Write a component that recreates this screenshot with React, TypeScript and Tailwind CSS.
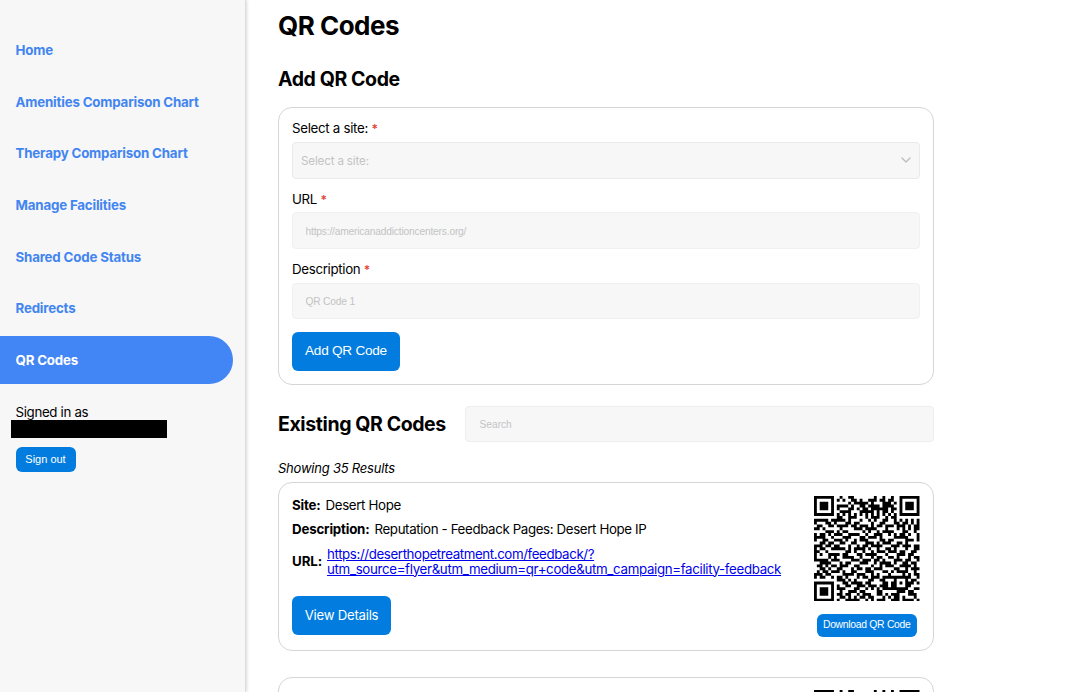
import { ChevronDown } from "lucide-react";

const links = [
  "Home",
  "Amenities Comparison Chart",
  "Therapy Comparison Chart",
  "Manage Facilities",
  "Shared Code Status",
  "Redirects",
];

const qrRows = [
  "1111111001001100000001001001001111111",
  "1000001010100110100111011011001000001",
  "1011101000001011111010001110101011101",
  "1011101011110100110111101111001011101",
  "1011101010001101011011111101101011101",
  "1000001001111000111110101101001000001",
  "1111111010101010101010101010101111111",
  "0000000011001110001011100101100000000",
  "1111101111101000100101001100101010101",
  "1000110100011011000010011000110110101",
  "0110011011110110111010110111011101011",
  "1101000001000011101111000100010101011",
  "0000111010110000010100101111000110010",
  "1011010111001111001001110010101101001",
  "1111001000111000110111010000111110001",
  "1001100111010010111000011011000011101",
  "0011011001100110001110101110011010000",
  "1110110110001001011011110001110111011",
  "1011001111101011110100100110100010011",
  "1100100000011010010010111011101100110",
  "1010011110110001101111000100011101100",
  "1000010100111100100010110011010001011",
  "1111101110000111011101101000111011001",
  "0011110001011000111001011110100110110",
  "0110101101110011000010010111001111010",
  "0011010011000101101101110000110010111",
  "0101101110100110001110001101011110010",
  "1110110000111101110010100010000101011",
  "1011001011010001011011101111111111001",
  "0000000011101010000110011000100010110",
  "1111111000110111101100001101101011101",
  "1000001010011001110111011101100011000",
  "1011101011100011001010101111111110011",
  "1011101001001110110000110000011101100",
  "1011101011011001011100110101110001110",
  "1000001001101010110110001010110100010",
  "1111111010011111001010111001110111101",
];

const qrPath = qrRows
  .flatMap((row, y) => [...row].map((v, x) => (v === "1" ? `M${x} ${y}h1v1h-1z` : "")))
  .join("");

function QrCode() {
  return (
    <svg viewBox="0 0 37 37" className="block size-[105.5px] shrink-0" aria-label="QR code">
      <path d={qrPath} fill="#000" />
    </svg>
  );
}

function Required() {
  return <span className="text-[12px] font-semibold text-[#e0453a]">*</span>;
}

function Field({ label, placeholder }: { label: string; placeholder: string }) {
  return (
    <label className="block h-[70.5px]">
      <span className="block h-[21.5px] text-[13.3px] leading-[16px] tracking-[-0.33px]">
        {label} <Required />
      </span>
      <input
        placeholder={placeholder}
        className="block h-[36.5px] w-full rounded-[4px] border border-[#f0f0f0] bg-[#f7f7f7] px-[12.5px] pt-[2px] font-['Liberation_Sans',sans-serif] text-[10.2px] tracking-[-0.17px] placeholder:text-[#c3c3c3]"
      />
    </label>
  );
}

export default function App() {
  return (
    <div className="flex h-[692px] w-[1080px] overflow-hidden bg-white font-[Inter,sans-serif] text-black">
      <aside className="z-10 w-[246px] shrink-0 border-r border-[#dddddd] bg-[#f7f7f7] pt-[26px] shadow-[1px_0_3px_rgba(0,0,0,0.15)]">
        <nav className="flex flex-col gap-[3.7px] text-[13.3px] font-bold tracking-[-0.17px] text-[#4285f0]">
          {links.map((link) => (
            <a key={link} className="flex h-12 items-center pt-[2px] pl-[15.5px]">{link}</a>
          ))}
          <a className="flex h-12 w-[233px] items-center rounded-r-full bg-[#4285f4] pt-px pl-[15.5px] text-white">QR Codes</a>
        </nav>
        <div className="pt-[19px]">
          <p className="relative top-[0.6px] pl-[15.5px] text-[13.3px] leading-[17px] tracking-[-0.33px]">Signed in as</p>
          <div className="ml-[11px] h-[18px] w-[156px] bg-black" />
          <button className="mt-[9px] ml-[15.5px] block h-[25px] w-[60px] rounded-[6px] bg-[#027ddf] font-['Liberation_Sans',sans-serif] text-[11px] text-white">Sign out</button>
        </div>
      </aside>

      <main className="ml-8 w-[655.5px] shrink-0">
        <h1 className="mt-[10px] text-[26px] leading-8 font-bold tracking-[-0.5px]">QR Codes</h1>
        <h2 className="mt-[25px] text-[19.5px] leading-6 font-bold tracking-[-0.4px]">Add QR Code</h2>

        <section className="mt-[16px] h-[278px] rounded-[14px] border border-[#d5d5d5] px-[13px] pt-3">
          <div className="h-[70.5px]">
            <p className="h-[22px] text-[13.3px] leading-[16px] tracking-[-0.3px]">
              Select a site: <Required />
            </p>
            <div className="flex h-[36.5px] items-center justify-between rounded-[4px] border border-[#eaeaea] bg-[#f7f7f7] pt-[2px] pr-[5px] pl-2 text-[11.6px] tracking-[-0.15px] text-[#c3c3c3]">
              <span>Select a site:</span>
              <ChevronDown size={16} strokeWidth={2} color="#bdbdbd" className="-mt-0.5" />
            </div>
          </div>
          <Field label="URL" placeholder="https://americanaddictioncenters.org/" />
          <Field label="Description" placeholder="QR Code 1" />
          <button className="block h-[39px] w-[108px] rounded-[6px] bg-[#027ddf] pt-px font-['Liberation_Sans',sans-serif] text-[13.6px] tracking-[-0.25px] text-white">Add QR Code</button>
        </section>

        <div className="mt-[20.5px] flex h-[37px] items-center justify-between">
          <h2 className="text-[19.5px] leading-6 font-bold tracking-[-0.4px]">Existing QR Codes</h2>
          <input
            placeholder="Search"
            className="h-[36.5px] w-[469px] rounded-[4px] border border-[#eeeeee] bg-[#f7f7f7] px-[14px] font-['Liberation_Sans',sans-serif] text-[10.2px] placeholder:text-[#c3c3c3]"
          />
        </div>
        <p className="mt-[17px] text-[13px] leading-4 tracking-[-0.22px] italic">Showing 35 Results</p>

        <section className="mt-[6px] flex h-[169px] justify-between rounded-[14px] border border-[#d5d5d5] px-[13px] pt-[13px]">
          <div className="text-[13.3px] leading-[15px] tracking-[-0.35px]">
            <p className="mt-[2px]"><b className="mr-[5px] tracking-[-0.18px]">Site:</b>Desert Hope</p>
            <p className="mt-[9.5px]"><b className="mr-[5px] tracking-[-0.18px]">Description:</b><span className="tracking-[-0.37px]">Reputation - Feedback Pages: Desert Hope IP</span></p>
            <div className="mt-[9.5px] flex items-center gap-[5px]">
              <b className="tracking-[-0.1px]">URL:</b>
              <a className="whitespace-nowrap text-[#0000ee] underline">
                <span className="tracking-[-0.39px]">https://deserthopetreatment.com/feedback/?</span>
                <br />
                <span className="tracking-[-0.33px]">utm_source=flyer&amp;utm_medium=qr+code&amp;utm_campaign=facility-feedback</span>
              </a>
            </div>
            <button className="mt-[19px] block h-[39px] w-[99px] rounded-[6px] bg-[#027ddf] pt-px text-[13.2px] tracking-[-0.25px] text-white">View Details</button>
          </div>
          <div className="flex flex-col items-center">
            <QrCode />
            <button className="mt-[12.5px] h-[23px] w-[100px] rounded-[6px] bg-[#027ddf] font-['Liberation_Sans',sans-serif] text-[10.4px] tracking-[-0.3px] whitespace-nowrap text-white">Download QR Code</button>
          </div>
        </section>

        <section className="mt-[26px] flex h-[169px] justify-end rounded-[14px] border border-[#d5d5d5] px-[13px] pt-[12px]">
          <QrCode />
        </section>
      </main>
    </div>
  );
}
